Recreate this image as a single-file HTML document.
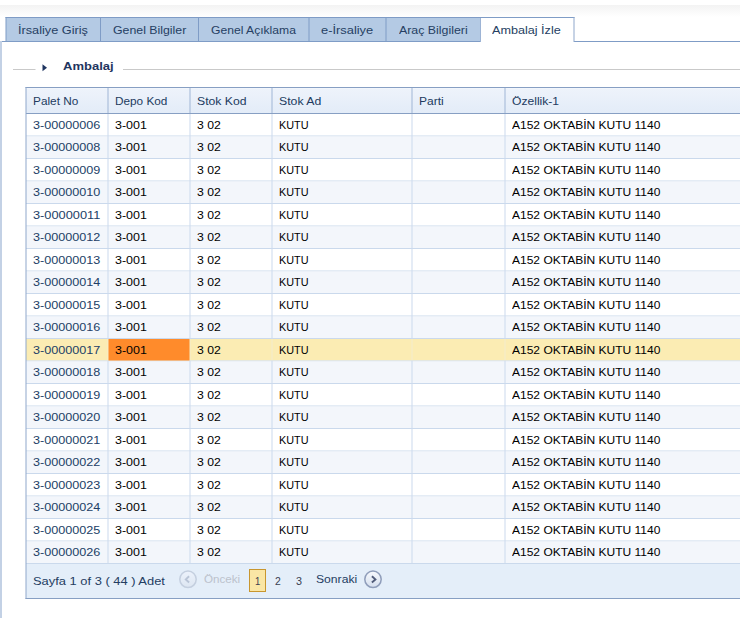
<!DOCTYPE html>
<html><head><meta charset="utf-8"><title>Ambalaj İzle</title>
<style>
html,body{margin:0;padding:0;background:#fff;}
body{width:740px;height:618px;overflow:hidden;position:relative;font-family:"Liberation Sans",sans-serif;font-size:11px;color:#000;}
.abs{position:absolute;}
.t{position:absolute;white-space:nowrap;display:inline-block;transform-origin:0 50%;line-height:14px;height:14px;}
.topgrad{left:0;top:5px;width:740px;height:12px;background:linear-gradient(#f3f3f3,#ffffff);}
.tabt{color:#263f63;}
.leg{font-weight:bold;color:#1f3560;}
.ht{color:#223b5f;top:94px;}
.c0{color:#223e66;}
.pg{color:#243d62;}
.pn{color:#3a4150;}
</style></head>
<body>
<div class="abs topgrad"></div>
<svg class="abs" style="left:0;top:0" width="740" height="618" viewBox="0 0 740 618"><rect x="6" y="17.5" width="475" height="24" fill="#b4cae4"/><rect x="5.5" y="17" width="569" height="1" fill="#7f9cc6"/><rect x="1" y="41" width="480" height="1" fill="#7f9cc6"/><rect x="574" y="41" width="166" height="1" fill="#7f9cc6"/><rect x="5.5" y="17" width="1" height="25" fill="#7f9cc6"/><rect x="100" y="17" width="1" height="25" fill="#7f9cc6"/><rect x="198" y="17" width="1" height="25" fill="#7f9cc6"/><rect x="308.5" y="17" width="1" height="25" fill="#7f9cc6"/><rect x="385.5" y="17" width="1" height="25" fill="#7f9cc6"/><rect x="480" y="18" width="1" height="24" fill="#9db4d5"/><rect x="573.5" y="17" width="1" height="25" fill="#8fa8cc"/><rect x="0" y="41" width="2" height="577" fill="#c3d1e5"/><rect x="13" y="69" width="22.5" height="1" fill="#c9c9c9"/><rect x="123" y="69" width="617" height="1" fill="#c9c9c9"/><path d="M42.5 64.3 L47 67.8 L42.5 71.3 Z" fill="#1f3560"/><rect x="26" y="564" width="714" height="34.5" fill="#e4eef9"/><defs><linearGradient id="hg" x1="0" y1="0" x2="0" y2="1"><stop offset="0" stop-color="#eef3fb"/><stop offset="1" stop-color="#e3ecf8"/></linearGradient></defs><rect x="26" y="88" width="714" height="25" fill="url(#hg)"/><rect x="26" y="88" width="714" height="0.5" fill="#f6f9fd"/><rect x="25.5" y="87" width="714.5" height="1" fill="#879fc3"/><rect x="26" y="113" width="714" height="1" fill="#879fc3"/><rect x="26" y="114.0" width="714" height="21.5" fill="#ffffff"/><rect x="26" y="135.5" width="714" height="1" fill="#cad9ec"/><rect x="26" y="136.5" width="714" height="21.5" fill="#f3f6fb"/><rect x="26" y="158.0" width="714" height="1" fill="#cad9ec"/><rect x="26" y="159.0" width="714" height="21.5" fill="#ffffff"/><rect x="26" y="180.5" width="714" height="1" fill="#cad9ec"/><rect x="26" y="181.5" width="714" height="21.5" fill="#f3f6fb"/><rect x="26" y="203.0" width="714" height="1" fill="#cad9ec"/><rect x="26" y="204.0" width="714" height="21.5" fill="#ffffff"/><rect x="26" y="225.5" width="714" height="1" fill="#cad9ec"/><rect x="26" y="226.5" width="714" height="21.5" fill="#f3f6fb"/><rect x="26" y="248.0" width="714" height="1" fill="#cad9ec"/><rect x="26" y="249.0" width="714" height="21.5" fill="#ffffff"/><rect x="26" y="270.5" width="714" height="1" fill="#cad9ec"/><rect x="26" y="271.5" width="714" height="21.5" fill="#f3f6fb"/><rect x="26" y="293.0" width="714" height="1" fill="#cad9ec"/><rect x="26" y="294.0" width="714" height="21.5" fill="#ffffff"/><rect x="26" y="315.5" width="714" height="1" fill="#cad9ec"/><rect x="26" y="316.5" width="714" height="21.5" fill="#f3f6fb"/><rect x="26" y="338.0" width="714" height="1" fill="#cad9ec"/><rect x="26" y="339.0" width="714" height="21.5" fill="#fbecb3"/><rect x="26" y="360.5" width="714" height="1" fill="#cad9ec"/><rect x="26" y="361.5" width="714" height="21.5" fill="#f3f6fb"/><rect x="26" y="383.0" width="714" height="1" fill="#cad9ec"/><rect x="26" y="384.0" width="714" height="21.5" fill="#ffffff"/><rect x="26" y="405.5" width="714" height="1" fill="#cad9ec"/><rect x="26" y="406.5" width="714" height="21.5" fill="#f3f6fb"/><rect x="26" y="428.0" width="714" height="1" fill="#cad9ec"/><rect x="26" y="429.0" width="714" height="21.5" fill="#ffffff"/><rect x="26" y="450.5" width="714" height="1" fill="#cad9ec"/><rect x="26" y="451.5" width="714" height="21.5" fill="#f3f6fb"/><rect x="26" y="473.0" width="714" height="1" fill="#cad9ec"/><rect x="26" y="474.0" width="714" height="21.5" fill="#ffffff"/><rect x="26" y="495.5" width="714" height="1" fill="#cad9ec"/><rect x="26" y="496.5" width="714" height="21.5" fill="#f3f6fb"/><rect x="26" y="518.0" width="714" height="1" fill="#cad9ec"/><rect x="26" y="519.0" width="714" height="21.5" fill="#ffffff"/><rect x="26" y="540.5" width="714" height="1" fill="#cad9ec"/><rect x="26" y="541.5" width="714" height="21.5" fill="#f3f6fb"/><rect x="26" y="563.0" width="714" height="1" fill="#cad9ec"/><rect x="107.5" y="88" width="1" height="25" fill="#9fb5d6"/><rect x="107.5" y="114" width="1" height="225.0" fill="#ccdaee"/><rect x="107.5" y="339.0" width="1" height="21.5" fill="#f3ebcd"/><rect x="107.5" y="360.5" width="1" height="202.5" fill="#ccdaee"/><rect x="189.5" y="88" width="1" height="25" fill="#9fb5d6"/><rect x="189.5" y="114" width="1" height="225.0" fill="#ccdaee"/><rect x="189.5" y="339.0" width="1" height="21.5" fill="#f3ebcd"/><rect x="189.5" y="360.5" width="1" height="202.5" fill="#ccdaee"/><rect x="271.5" y="88" width="1" height="25" fill="#9fb5d6"/><rect x="271.5" y="114" width="1" height="225.0" fill="#ccdaee"/><rect x="271.5" y="339.0" width="1" height="21.5" fill="#f3ebcd"/><rect x="271.5" y="360.5" width="1" height="202.5" fill="#ccdaee"/><rect x="411.5" y="88" width="1" height="25" fill="#9fb5d6"/><rect x="411.5" y="114" width="1" height="225.0" fill="#ccdaee"/><rect x="411.5" y="339.0" width="1" height="21.5" fill="#f3ebcd"/><rect x="411.5" y="360.5" width="1" height="202.5" fill="#ccdaee"/><rect x="504.5" y="88" width="1" height="25" fill="#9fb5d6"/><rect x="504.5" y="114" width="1" height="225.0" fill="#ccdaee"/><rect x="504.5" y="339.0" width="1" height="21.5" fill="#f3ebcd"/><rect x="504.5" y="360.5" width="1" height="202.5" fill="#ccdaee"/><rect x="108.5" y="339.0" width="81" height="21.5" fill="#ff8b2b"/><rect x="25.5" y="87" width="1" height="512" fill="#8fa8cc"/><rect x="25.5" y="598" width="714.5" height="1" fill="#879fc3"/></svg>
<span class="t tabt" style="left:18.0px;top:23px;transform:scaleX(1.1551)">İrsaliye Giriş</span>
<span class="t tabt" style="left:112.60000000000001px;top:23px;transform:scaleX(1.1204)">Genel Bilgiler</span>
<span class="t tabt" style="left:210.9px;top:23px;transform:scaleX(1.1019)">Genel Açıklama</span>
<span class="t tabt" style="left:321.0px;top:23px;transform:scaleX(1.1697)">e-İrsaliye</span>
<span class="t tabt" style="left:398.9px;top:23px;transform:scaleX(1.1236)">Araç Bilgileri</span>
<span class="t tabt" style="left:492.2px;top:23px;transform:scaleX(1.1465)">Ambalaj İzle</span>
<span class="t leg" style="left:62.9px;top:59px;transform:scaleX(1.1823)">Ambalaj</span>
<span class="t ht" style="left:33px;transform:scaleX(1.0734)">Palet No</span>
<span class="t ht" style="left:114.9px;transform:scaleX(1.0708)">Depo Kod</span>
<span class="t ht" style="left:196.8px;transform:scaleX(1.1089)">Stok Kod</span>
<span class="t ht" style="left:279px;transform:scaleX(1.1155)">Stok Ad</span>
<span class="t ht" style="left:419px;transform:scaleX(1.0917)">Parti</span>
<span class="t ht" style="left:511.6px;transform:scaleX(1.1005)">Özellik-1</span>
<span class="t c0" style="left:33px;top:117.5px;transform:scaleX(1.1458)">3-00000006</span>
<span class="t" style="left:114.9px;top:117.5px;transform:scaleX(1.1336)">3-001</span>
<span class="t" style="left:197.3px;top:117.5px;transform:scaleX(1.1110)">3 02</span>
<span class="t" style="left:279px;top:117.5px;transform:scaleX(0.9849)">KUTU</span>
<span class="t" style="left:511.6px;top:117.5px;transform:scaleX(1.0917)">A152 OKTABİN KUTU 1140</span>
<span class="t c0" style="left:33px;top:140.0px;transform:scaleX(1.1458)">3-00000008</span>
<span class="t" style="left:114.9px;top:140.0px;transform:scaleX(1.1336)">3-001</span>
<span class="t" style="left:197.3px;top:140.0px;transform:scaleX(1.1110)">3 02</span>
<span class="t" style="left:279px;top:140.0px;transform:scaleX(0.9849)">KUTU</span>
<span class="t" style="left:511.6px;top:140.0px;transform:scaleX(1.0917)">A152 OKTABİN KUTU 1140</span>
<span class="t c0" style="left:33px;top:162.5px;transform:scaleX(1.1458)">3-00000009</span>
<span class="t" style="left:114.9px;top:162.5px;transform:scaleX(1.1336)">3-001</span>
<span class="t" style="left:197.3px;top:162.5px;transform:scaleX(1.1110)">3 02</span>
<span class="t" style="left:279px;top:162.5px;transform:scaleX(0.9849)">KUTU</span>
<span class="t" style="left:511.6px;top:162.5px;transform:scaleX(1.0917)">A152 OKTABİN KUTU 1140</span>
<span class="t c0" style="left:33px;top:185.0px;transform:scaleX(1.1458)">3-00000010</span>
<span class="t" style="left:114.9px;top:185.0px;transform:scaleX(1.1336)">3-001</span>
<span class="t" style="left:197.3px;top:185.0px;transform:scaleX(1.1110)">3 02</span>
<span class="t" style="left:279px;top:185.0px;transform:scaleX(0.9849)">KUTU</span>
<span class="t" style="left:511.6px;top:185.0px;transform:scaleX(1.0917)">A152 OKTABİN KUTU 1140</span>
<span class="t c0" style="left:33px;top:207.5px;transform:scaleX(1.1622)">3-00000011</span>
<span class="t" style="left:114.9px;top:207.5px;transform:scaleX(1.1336)">3-001</span>
<span class="t" style="left:197.3px;top:207.5px;transform:scaleX(1.1110)">3 02</span>
<span class="t" style="left:279px;top:207.5px;transform:scaleX(0.9849)">KUTU</span>
<span class="t" style="left:511.6px;top:207.5px;transform:scaleX(1.0917)">A152 OKTABİN KUTU 1140</span>
<span class="t c0" style="left:33px;top:230.0px;transform:scaleX(1.1458)">3-00000012</span>
<span class="t" style="left:114.9px;top:230.0px;transform:scaleX(1.1336)">3-001</span>
<span class="t" style="left:197.3px;top:230.0px;transform:scaleX(1.1110)">3 02</span>
<span class="t" style="left:279px;top:230.0px;transform:scaleX(0.9849)">KUTU</span>
<span class="t" style="left:511.6px;top:230.0px;transform:scaleX(1.0917)">A152 OKTABİN KUTU 1140</span>
<span class="t c0" style="left:33px;top:252.5px;transform:scaleX(1.1458)">3-00000013</span>
<span class="t" style="left:114.9px;top:252.5px;transform:scaleX(1.1336)">3-001</span>
<span class="t" style="left:197.3px;top:252.5px;transform:scaleX(1.1110)">3 02</span>
<span class="t" style="left:279px;top:252.5px;transform:scaleX(0.9849)">KUTU</span>
<span class="t" style="left:511.6px;top:252.5px;transform:scaleX(1.0917)">A152 OKTABİN KUTU 1140</span>
<span class="t c0" style="left:33px;top:275.0px;transform:scaleX(1.1458)">3-00000014</span>
<span class="t" style="left:114.9px;top:275.0px;transform:scaleX(1.1336)">3-001</span>
<span class="t" style="left:197.3px;top:275.0px;transform:scaleX(1.1110)">3 02</span>
<span class="t" style="left:279px;top:275.0px;transform:scaleX(0.9849)">KUTU</span>
<span class="t" style="left:511.6px;top:275.0px;transform:scaleX(1.0917)">A152 OKTABİN KUTU 1140</span>
<span class="t c0" style="left:33px;top:297.5px;transform:scaleX(1.1458)">3-00000015</span>
<span class="t" style="left:114.9px;top:297.5px;transform:scaleX(1.1336)">3-001</span>
<span class="t" style="left:197.3px;top:297.5px;transform:scaleX(1.1110)">3 02</span>
<span class="t" style="left:279px;top:297.5px;transform:scaleX(0.9849)">KUTU</span>
<span class="t" style="left:511.6px;top:297.5px;transform:scaleX(1.0917)">A152 OKTABİN KUTU 1140</span>
<span class="t c0" style="left:33px;top:320.0px;transform:scaleX(1.1458)">3-00000016</span>
<span class="t" style="left:114.9px;top:320.0px;transform:scaleX(1.1336)">3-001</span>
<span class="t" style="left:197.3px;top:320.0px;transform:scaleX(1.1110)">3 02</span>
<span class="t" style="left:279px;top:320.0px;transform:scaleX(0.9849)">KUTU</span>
<span class="t" style="left:511.6px;top:320.0px;transform:scaleX(1.0917)">A152 OKTABİN KUTU 1140</span>
<span class="t c0" style="left:33px;top:342.5px;transform:scaleX(1.1458)">3-00000017</span>
<span class="t" style="left:114.9px;top:342.5px;transform:scaleX(1.1336)">3-001</span>
<span class="t" style="left:197.3px;top:342.5px;transform:scaleX(1.1110)">3 02</span>
<span class="t" style="left:279px;top:342.5px;transform:scaleX(0.9849)">KUTU</span>
<span class="t" style="left:511.6px;top:342.5px;transform:scaleX(1.0917)">A152 OKTABİN KUTU 1140</span>
<span class="t c0" style="left:33px;top:365.0px;transform:scaleX(1.1458)">3-00000018</span>
<span class="t" style="left:114.9px;top:365.0px;transform:scaleX(1.1336)">3-001</span>
<span class="t" style="left:197.3px;top:365.0px;transform:scaleX(1.1110)">3 02</span>
<span class="t" style="left:279px;top:365.0px;transform:scaleX(0.9849)">KUTU</span>
<span class="t" style="left:511.6px;top:365.0px;transform:scaleX(1.0917)">A152 OKTABİN KUTU 1140</span>
<span class="t c0" style="left:33px;top:387.5px;transform:scaleX(1.1458)">3-00000019</span>
<span class="t" style="left:114.9px;top:387.5px;transform:scaleX(1.1336)">3-001</span>
<span class="t" style="left:197.3px;top:387.5px;transform:scaleX(1.1110)">3 02</span>
<span class="t" style="left:279px;top:387.5px;transform:scaleX(0.9849)">KUTU</span>
<span class="t" style="left:511.6px;top:387.5px;transform:scaleX(1.0917)">A152 OKTABİN KUTU 1140</span>
<span class="t c0" style="left:33px;top:410.0px;transform:scaleX(1.1458)">3-00000020</span>
<span class="t" style="left:114.9px;top:410.0px;transform:scaleX(1.1336)">3-001</span>
<span class="t" style="left:197.3px;top:410.0px;transform:scaleX(1.1110)">3 02</span>
<span class="t" style="left:279px;top:410.0px;transform:scaleX(0.9849)">KUTU</span>
<span class="t" style="left:511.6px;top:410.0px;transform:scaleX(1.0917)">A152 OKTABİN KUTU 1140</span>
<span class="t c0" style="left:33px;top:432.5px;transform:scaleX(1.1458)">3-00000021</span>
<span class="t" style="left:114.9px;top:432.5px;transform:scaleX(1.1336)">3-001</span>
<span class="t" style="left:197.3px;top:432.5px;transform:scaleX(1.1110)">3 02</span>
<span class="t" style="left:279px;top:432.5px;transform:scaleX(0.9849)">KUTU</span>
<span class="t" style="left:511.6px;top:432.5px;transform:scaleX(1.0917)">A152 OKTABİN KUTU 1140</span>
<span class="t c0" style="left:33px;top:455.0px;transform:scaleX(1.1458)">3-00000022</span>
<span class="t" style="left:114.9px;top:455.0px;transform:scaleX(1.1336)">3-001</span>
<span class="t" style="left:197.3px;top:455.0px;transform:scaleX(1.1110)">3 02</span>
<span class="t" style="left:279px;top:455.0px;transform:scaleX(0.9849)">KUTU</span>
<span class="t" style="left:511.6px;top:455.0px;transform:scaleX(1.0917)">A152 OKTABİN KUTU 1140</span>
<span class="t c0" style="left:33px;top:477.5px;transform:scaleX(1.1458)">3-00000023</span>
<span class="t" style="left:114.9px;top:477.5px;transform:scaleX(1.1336)">3-001</span>
<span class="t" style="left:197.3px;top:477.5px;transform:scaleX(1.1110)">3 02</span>
<span class="t" style="left:279px;top:477.5px;transform:scaleX(0.9849)">KUTU</span>
<span class="t" style="left:511.6px;top:477.5px;transform:scaleX(1.0917)">A152 OKTABİN KUTU 1140</span>
<span class="t c0" style="left:33px;top:500.0px;transform:scaleX(1.1458)">3-00000024</span>
<span class="t" style="left:114.9px;top:500.0px;transform:scaleX(1.1336)">3-001</span>
<span class="t" style="left:197.3px;top:500.0px;transform:scaleX(1.1110)">3 02</span>
<span class="t" style="left:279px;top:500.0px;transform:scaleX(0.9849)">KUTU</span>
<span class="t" style="left:511.6px;top:500.0px;transform:scaleX(1.0917)">A152 OKTABİN KUTU 1140</span>
<span class="t c0" style="left:33px;top:522.5px;transform:scaleX(1.1458)">3-00000025</span>
<span class="t" style="left:114.9px;top:522.5px;transform:scaleX(1.1336)">3-001</span>
<span class="t" style="left:197.3px;top:522.5px;transform:scaleX(1.1110)">3 02</span>
<span class="t" style="left:279px;top:522.5px;transform:scaleX(0.9849)">KUTU</span>
<span class="t" style="left:511.6px;top:522.5px;transform:scaleX(1.0917)">A152 OKTABİN KUTU 1140</span>
<span class="t c0" style="left:33px;top:545.0px;transform:scaleX(1.1458)">3-00000026</span>
<span class="t" style="left:114.9px;top:545.0px;transform:scaleX(1.1336)">3-001</span>
<span class="t" style="left:197.3px;top:545.0px;transform:scaleX(1.1110)">3 02</span>
<span class="t" style="left:279px;top:545.0px;transform:scaleX(0.9849)">KUTU</span>
<span class="t" style="left:511.6px;top:545.0px;transform:scaleX(1.0917)">A152 OKTABİN KUTU 1140</span>
<span class="t pg" style="left:32.8px;top:574px;transform:scaleX(1.1723)">Sayfa 1 of 3 ( 44 ) Adet</span>
<svg class="abs" style="left:178px;top:569px" width="20" height="20" viewBox="0 0 20 20"><defs><linearGradient id="g1" x1="0" y1="0" x2="0" y2="1"><stop offset="0" stop-color="#ecf2fb"/><stop offset="1" stop-color="#dde6f2"/></linearGradient></defs><circle cx="10" cy="10.3" r="8.2" fill="url(#g1)" stroke="#c4cfdf" stroke-width="1.5"/><path d="M11.1 7.3 L7.8 10.4 L11.1 13.5" fill="none" stroke="#b9c4d6" stroke-width="1.9"/></svg>
<span class="t" style="left:204.3px;top:572px;color:#bcc2cc;transform:scaleX(1.0569)">Önceki</span>
<div class="abs" style="left:249px;top:569px;width:17px;height:23px;box-sizing:border-box;border:1px solid #c8962f;background:#fae6a5"></div>
<span class="t pn" style="left:254.9px;top:573.7px;transform:scaleX(0.8653)">1</span>
<span class="t pn" style="left:274.9px;top:573.7px;transform:scaleX(0.9469)">2</span>
<span class="t pn" style="left:295.7px;top:573.7px;transform:scaleX(0.9796)">3</span>
<span class="t pg" style="left:315.7px;top:572px;transform:scaleX(1.1047)">Sonraki</span>
<svg class="abs" style="left:363px;top:569px" width="20" height="20" viewBox="0 0 20 20"><defs><linearGradient id="g2" x1="0" y1="0" x2="0" y2="1"><stop offset="0" stop-color="#f7f9fd"/><stop offset="1" stop-color="#d5dfee"/></linearGradient></defs><circle cx="10" cy="10.3" r="8.2" fill="url(#g2)" stroke="#8f9dba" stroke-width="1.5"/><path d="M8.9 7.3 L12.4 10.4 L8.9 13.5" fill="none" stroke="#505b79" stroke-width="1.9"/></svg>
</body></html>
